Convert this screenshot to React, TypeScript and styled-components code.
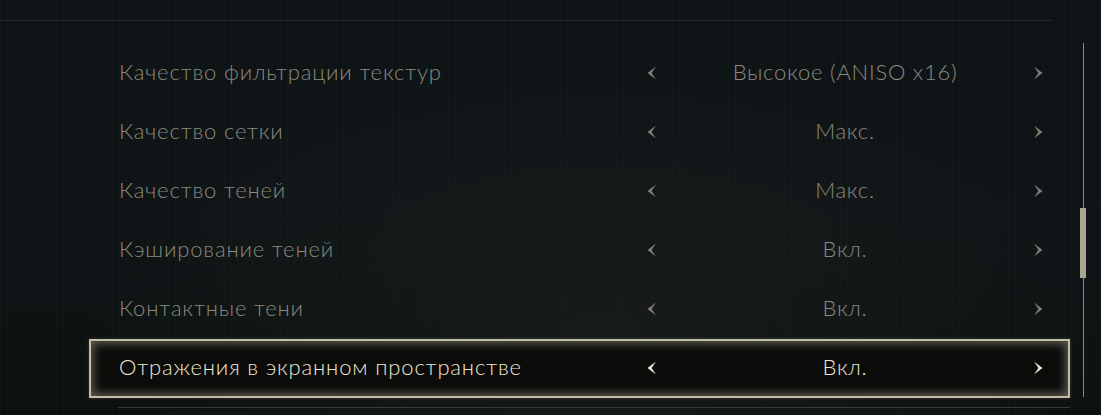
import React from 'react';
import styled, { createGlobalStyle } from 'styled-components';

const GlobalStyle = createGlobalStyle`
  html, body {
    margin: 0;
    padding: 0;
    background: #0d1214;
  }
  body {
    font-family: 'Lato', 'Open Sans', sans-serif;
  }
`;

const Screen = styled.div`
  width: 1101px;
  height: 415px;
  overflow: hidden;
  position: relative;
  background:
    radial-gradient(ellipse at 55% 80%, rgba(30, 34, 30, 0.55), transparent 60%),
    repeating-linear-gradient(90deg, rgba(255, 255, 255, 0.012) 0px, rgba(255, 255, 255, 0.012) 1px, transparent 1px, transparent 7px),
    linear-gradient(180deg, #0e1416 0%, #0f1517 50%, #0c1010 100%);
`;

const TopRule = styled.div`
  margin-top: 20px;
  width: 1052px;
  height: 1px;
  background: #2b2826;
`;

const Body = styled.div`
  display: flex;
  padding-top: 23px;
`;

const List = styled.div`
  margin-left: 89px;
  width: 981px;
  display: flex;
  flex-direction: column;
`;

const Row = styled.div<{ $active?: boolean }>`
  height: 59px;
  box-sizing: border-box;
  display: flex;
  align-items: center;
  padding: 0 0 4px 30px;
  border: 2px solid ${(p) => (p.$active ? '#c2bda7' : 'transparent')};
  background: ${(p) => (p.$active ? '#0b0b0a' : 'transparent')};
  box-shadow: ${(p) =>
    p.$active
      ? 'inset 0 0 9px 3px rgba(200, 194, 170, 0.42), 0 0 3px rgba(200, 194, 170, 0.25)'
      : 'none'};
  color: ${(p) => (p.$active ? '#eee8d3' : '#8c897e')};
`;

const Label = styled.div`
  flex: 1;
  font-size: 22px;
  font-weight: 300;
  letter-spacing: 0.85px;
  margin-left: -2px;
`;

const Control = styled.div`
  width: 410px;
  margin-right: 18px;
  display: grid;
  grid-template-columns: 24px 1fr 24px;
  align-items: center;
`;

const Value = styled.div`
  text-align: center;
  font-size: 22px;
  font-weight: 300;
  letter-spacing: 0.75px;
`;

const Arrow = styled.svg<{ $active?: boolean }>`
  justify-self: center;
  width: 10px;
  height: 14px;
  margin-top: 3px;
  fill: ${(p) => (p.$active ? '#eee8d3' : '#807d73')};
`;

const ScrollTrack = styled.div`
  margin-left: 10px;
  margin-top: -1px;
  width: 6px;
  height: 354px;
  display: flex;
  justify-content: center;
  position: relative;
`;

const TrackLine = styled.div`
  width: 1px;
  height: 100%;
  background: #8e8a7e;
`;

const Thumb = styled.div`
  position: absolute;
  top: 165px;
  left: 0;
  width: 6px;
  height: 70px;
  background: #a9a593;
`;

const BottomRule = styled.div`
  margin: 9px 0 0 118px;
  width: 952px;
  height: 1px;
  background: #3a3935;
`;

const LeftArrow = ({ active }: { active?: boolean }) => (
  <Arrow $active={active} viewBox="0 0 10 14">
    <path d="M9 0.5 L0.5 7 L9 13.5 L4.6 7 Z" />
  </Arrow>
);

const RightArrow = ({ active }: { active?: boolean }) => (
  <Arrow $active={active} viewBox="0 0 10 14">
    <path d="M1 0.5 L9.5 7 L1 13.5 L5.4 7 Z" />
  </Arrow>
);

const settings = [
  { label: 'Качество фильтрации текстур', value: 'Высокое (ANISO x16)' },
  { label: 'Качество сетки', value: 'Макс.' },
  { label: 'Качество теней', value: 'Макс.' },
  { label: 'Кэширование теней', value: 'Вкл.' },
  { label: 'Контактные тени', value: 'Вкл.' },
  { label: 'Отражения в экранном пространстве', value: 'Вкл.', active: true },
];

export default function App() {
  return (
    <>
      <GlobalStyle />
      <Screen>
        <TopRule />
        <Body>
          <List>
            {settings.map((s) => (
              <Row key={s.label} $active={s.active}>
                <Label>{s.label}</Label>
                <Control>
                  <LeftArrow active={s.active} />
                  <Value>{s.value}</Value>
                  <RightArrow active={s.active} />
                </Control>
              </Row>
            ))}
          </List>
          <ScrollTrack>
            <TrackLine />
            <Thumb />
          </ScrollTrack>
        </Body>
        <BottomRule />
      </Screen>
    </>
  );
}
